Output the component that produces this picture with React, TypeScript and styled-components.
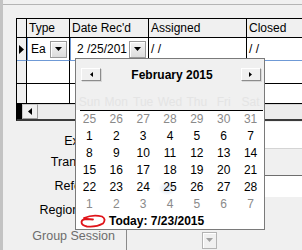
import React from 'react'
import styled, { createGlobalStyle } from 'styled-components'

const GlobalStyle = createGlobalStyle`
  html, body {
    margin: 0;
    padding: 0;
    background: #f0f0f0;
    overflow: hidden;
  }
  body {
    font-family: "Liberation Sans", Arial, sans-serif;
    font-size: 12px;
    color: #000;
  }
`

const columns = [10, 43, 79, 98, 170]

const prevDays = [25, 26, 27, 28, 29, 30, 31]
const nextDays = [1, 2, 3, 4, 5, 6, 7]
const monthDays = Array.from({ length: 28 }, (_, i) => i + 1)
const dayNames = ['Sun', 'Mon', 'Tue', 'Wed', 'Thu', 'Fri', 'Sat']

type FieldKind = 'white' | 'gray' | 'boxed'

const formRows: { label: string; gap: number; height: number; kind: FieldKind; bottom?: boolean }[] = [
  { label: 'Exit Date', gap: 1, height: 27, kind: 'white', bottom: true },
  { label: 'Transferred', gap: 1, height: 25, kind: 'gray' },
  { label: 'Refer Date', gap: 0, height: 22, kind: 'boxed' },
  { label: 'Region Office', gap: 0, height: 26, kind: 'gray' },
]

export default function App() {
  return (
    <>
      <GlobalStyle />
      <Window>
        <SideStrip />
        <Body>
          <TopEdge />
          <GridFrame>
            <Grid style={{ gridTemplateColumns: columns.map(c => `${c}px`).join(' ') }}>
              <Cell $head />
              <Cell $head>Type</Cell>
              <Cell $head>Date Rec'd</Cell>
              <Cell $head>Assigned</Cell>
              <Cell $head>Closed</Cell>

              <Cell $rowHead $focus>
                <svg width='5' height='9' viewBox='0 0 5 9'>
                  <path d='M0 0 L5 4.5 L0 9 Z' fill='#000' />
                </svg>
              </Cell>
              <Cell $focus>
                <Combo>
                  <ComboText>Ea</ComboText>
                  <DropButton><DownArrow /></DropButton>
                </Combo>
              </Cell>
              <Cell $focus>
                <Combo $indent>
                  <ComboText>2 /25/201</ComboText>
                  <DropButton><DownArrow /></DropButton>
                </Combo>
              </Cell>
              <Cell $focus $pad>/ /</Cell>
              <Cell $focus $pad>/ /</Cell>

              {[0, 1].map(r => (
                <React.Fragment key={r}>
                  <Cell $rowHead />
                  <Cell />
                  <Cell />
                  <Cell />
                  <Cell />
                </React.Fragment>
              ))}
            </Grid>
            <HScroll>
              <ScrollCorner />
              <ScrollButton>
                <svg width='4' height='7' viewBox='0 0 4 7'>
                  <path d='M4 0 L0 3.5 L4 7 Z' fill='#000' />
                </svg>
              </ScrollButton>
              <ScrollTrack />
            </HScroll>
          </GridFrame>

          <Form>
            {formRows.map(row => (
              <FormRow key={row.label} $gap={row.gap} $height={row.height} $align={row.bottom ? 'flex-end' : 'center'}>
                <FieldLabel>{row.label}</FieldLabel>
                <TextField $kind={row.kind} />
              </FormRow>
            ))}
            <FormRow $gap={6} $height={21} $align='flex-start'>
              <FieldLabel $disabled>Group Session</FieldLabel>
              <SelectBox>
                <DropButton $disabled $small><DownArrow $disabled /></DropButton>
              </SelectBox>
            </FormRow>
          </Form>
        </Body>

        <Calendar>
          <CalHeader>
            <TitleRow>
              <NavButton>
                <svg width='3' height='5' viewBox='0 0 3 5'>
                  <path d='M3 0 L0 2.5 L3 5 Z' fill='#000' />
                </svg>
              </NavButton>
              <MonthTitle>February 2015</MonthTitle>
              <NavButton>
                <svg width='3' height='5' viewBox='0 0 3 5'>
                  <path d='M0 0 L3 2.5 L0 5 Z' fill='#000' />
                </svg>
              </NavButton>
            </TitleRow>
            <DayNames>
              {dayNames.map(d => <DayName key={d}>{d}</DayName>)}
            </DayNames>
          </CalHeader>
          <Rule />
          <Days>
            {prevDays.map(d => <Day key={`p${d}`} $other>{d}</Day>)}
            {monthDays.map(d => <Day key={d} $selected={d === 25}>{d}</Day>)}
            {nextDays.map(d => <Day key={`n${d}`} $other>{d}</Day>)}
          </Days>
          <TodayRow>
            <svg width='27' height='14' viewBox='0 0 27 14'>
              <path
                d='M4 4 Q13 0 22 2.5 Q26.5 5 23 9.5 Q16 13.5 7 12.5 Q1.5 11.5 1.5 8 Q2 5 7 5 L13 5.5'
                fill='none'
                stroke='#e0141a'
                strokeWidth='1.8'
                strokeLinecap='round'
              />
            </svg>
            <TodayText>Today: 7/23/2015</TodayText>
          </TodayRow>
        </Calendar>
      </Window>
    </>
  )
}

function DownArrow({ $disabled }: { $disabled?: boolean }) {
  return (
    <svg width='7' height='4' viewBox='0 0 7 4'>
      <path d='M0 0 L7 0 L3.5 4 Z' fill={$disabled ? '#a0a0a0' : '#000'} />
    </svg>
  )
}

const Window = styled.div`
  position: relative;
  display: flex;
  width: 302px;
  height: 250px;
  overflow: hidden;
  background: #f0f0f0;
`

const SideStrip = styled.div`
  flex: none;
  width: 3px;
  background: #c3c3c3;
`

const Body = styled.div`
  display: flex;
  flex: 1;
  flex-direction: column;
  min-width: 0;
`

const TopEdge = styled.div`
  flex: none;
  height: 4px;
  border-bottom: 1px solid #b4b4b4;
`

const GridFrame = styled.div`
  flex: none;
  width: 420px;
  margin: 13px 0 0 13px;
  border-top: 1px solid #000;
  border-left: 1px solid #000;
  border-bottom: 2px solid #3a3a3a;
`

const Grid = styled.div`
  display: grid;
  grid-template-rows: 19px 23px 23px 20px;
`

const Cell = styled.div<{ $head?: boolean; $rowHead?: boolean; $focus?: boolean; $pad?: boolean }>`
  box-sizing: border-box;
  display: flex;
  align-items: center;
  min-width: 0;
  overflow: hidden;
  white-space: nowrap;
  padding-left: ${p => (p.$head || p.$pad ? '2px' : '0')};
  justify-content: ${p => (p.$rowHead ? 'center' : 'flex-start')};
  background: ${p => (p.$head || p.$rowHead ? '#f0f0f0' : '#fff')};
  border-right: 1px solid #000;
  border-bottom: 1px solid ${p => (p.$focus ? '#6f9ad6' : '#000')};
`

const Combo = styled.div<{ $indent?: boolean }>`
  box-sizing: border-box;
  display: flex;
  align-items: center;
  width: 100%;
  height: 100%;
  padding: 0 1px 0 ${p => (p.$indent ? '6px' : '3px')};
  border-left: 1px solid #6f9ad6;
  background: #fff;
`

const ComboText = styled.span`
  flex: 1;
  overflow: hidden;
  font-size: 12px;
`

const DropButton = styled.div<{ $disabled?: boolean; $small?: boolean }>`
  box-sizing: border-box;
  display: flex;
  flex: none;
  align-items: center;
  justify-content: center;
  width: ${p => (p.$small ? '15px' : '17px')};
  height: 17px;
  margin-right: 1px;
  background: ${p => (p.$disabled ? '#f0f0f0' : 'linear-gradient(#f4f4f4, #dcdcdc)')};
  border: 1px solid ${p => (p.$disabled ? '#b4b4b4' : '#9a9a9a')};
  box-shadow: inset 1px 1px 0 #fff;
`

const HScroll = styled.div`
  display: flex;
  height: 15px;
  background: #e8e8e8;
`

const ScrollCorner = styled.div`
  width: 5px;
  background: #000;
`

const ScrollButton = styled.div`
  box-sizing: border-box;
  display: flex;
  align-items: center;
  justify-content: center;
  width: 16px;
  background: #f0f0f0;
  border: 1px solid #c8c8c8;
  border-right-color: #a0a0a0;
  border-bottom-color: #a0a0a0;
`

const ScrollTrack = styled.div`
  flex: 1;
  background: #ececec;
  border-top: 1px solid #d6d6d6;
`

const Form = styled.div`
  display: flex;
  flex-direction: column;
`

const FormRow = styled.div<{ $gap: number; $height: number; $align: string }>`
  display: flex;
  align-items: ${p => p.$align};
  gap: 11px;
  height: ${p => p.$height}px;
  margin-top: ${p => p.$gap}px;
`

const FieldLabel = styled.div<{ $disabled?: boolean }>`
  flex: none;
  width: 112px;
  line-height: 15px;
  font-size: 12.5px;
  text-align: right;
  white-space: nowrap;
  color: ${p => (p.$disabled ? '#6d6d6d' : '#000')};
`

const TextField = styled.div<{ $kind: FieldKind }>`
  box-sizing: border-box;
  flex: 1;
  align-self: stretch;
  background: ${p => (p.$kind === 'gray' ? '#f0f0f0' : '#fff')};
  border-top: ${p => (p.$kind === 'boxed' ? '1px solid #6e6e6e' : 'none')};
  border-bottom: ${p => (p.$kind === 'white' ? '1px solid #d4d4d4' : 'none')};
`

const SelectBox = styled.div`
  box-sizing: border-box;
  display: flex;
  align-items: center;
  justify-content: flex-end;
  width: 93px;
  height: 21px;
  padding-right: 1px;
  background: #f0f0f0;
  border-left: 1px solid #8a8a8a;
  border-top: 1px solid #8a8a8a;
`

const Calendar = styled.div`
  position: absolute;
  left: 75px;
  top: 58px;
  box-sizing: border-box;
  display: flex;
  flex-direction: column;
  width: 190px;
  height: 172px;
  background: #fff;
  border: 1px solid #7a7a7a;
`

const CalHeader = styled.div`
  display: flex;
  flex-direction: column;
  height: 51px;
  padding-top: 9px;
  box-sizing: border-box;
  background: #f0f0f0;
`

const TitleRow = styled.div`
  display: flex;
  align-items: center;
  justify-content: space-between;
  height: 13px;
  padding: 0 3px 0 5px;
`

const NavButton = styled.div`
  box-sizing: border-box;
  display: flex;
  align-items: center;
  justify-content: center;
  width: 20px;
  height: 13px;
  background: #f0f0f0;
  border: 1px solid #fff;
  border-right-color: #8c8c8c;
  border-bottom-color: #8c8c8c;
  box-shadow: 1px 1px 0 #d8d8d8;
`

const MonthTitle = styled.div`
  font-size: 12px;
  font-weight: bold;
  padding-left: 2px;
`

const DayNames = styled.div`
  display: grid;
  grid-template-columns: repeat(7, 1fr);
  margin-top: 13px;
  height: 16px;
  align-items: center;
`

const DayName = styled.div`
  text-align: center;
  font-size: 12px;
  color: #e4e4e4;
`

const Rule = styled.div`
  height: 1px;
  margin: 0 1px 0 4px;
  background: #000;
`

const Days = styled.div`
  display: grid;
  grid-template-columns: repeat(7, 1fr);
  grid-auto-rows: 17px;
`

const Day = styled.div<{ $other?: boolean; $selected?: boolean }>`
  display: flex;
  align-items: center;
  justify-content: center;
  font-size: 12px;
  color: ${p => (p.$other ? '#8a8a8a' : '#000')};
  background: ${p =>
    p.$selected ? 'radial-gradient(ellipse 9px 7px at 40% 55%, #dfe9f5 0%, #eef3f9 60%, #fff 100%)' : 'transparent'};
`

const TodayRow = styled.div`
  display: flex;
  align-items: center;
  gap: 2px;
  height: 17px;
  padding-left: 4px;
`

const TodayText = styled.div`
  font-size: 12px;
  font-weight: bold;
`
